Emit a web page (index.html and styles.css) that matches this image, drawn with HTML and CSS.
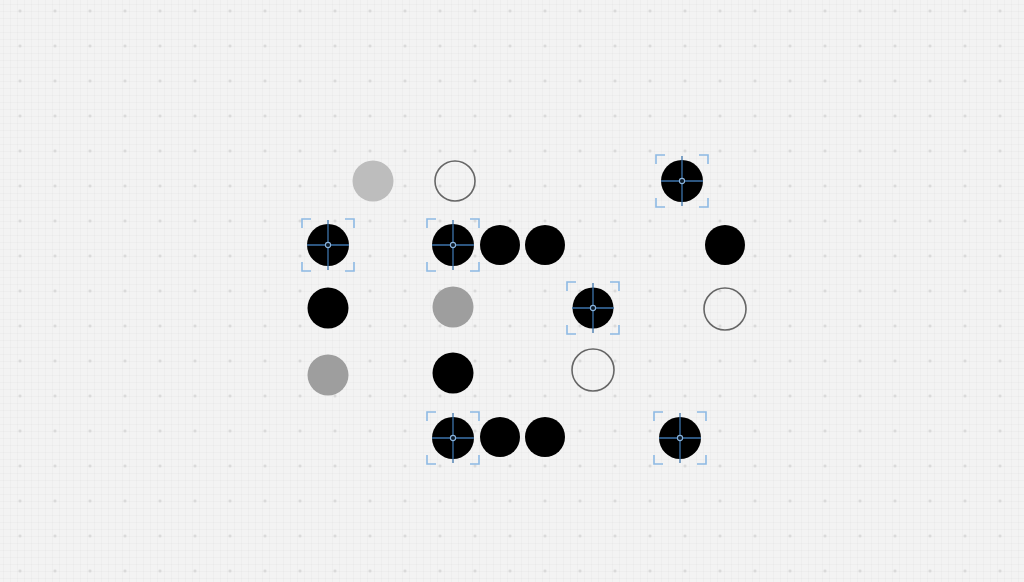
FILE: index.html
```html
<!DOCTYPE html>
<html>
<head>
<meta charset="utf-8">
<link rel="stylesheet" href="styles.css">
</head>
<body>
<div class="canvas">
  <svg class="board" width="1024" height="582" viewBox="0 0 1024 582">
    <defs>
      <g id="sel">
        <path class="bracket" d="M-26 -17 V-26 H-17 M17 -26 H26 V-17 M26 17 V26 H17 M-17 26 H-26 V17"/>
        <line class="cross" x1="0" y1="-25" x2="0" y2="25"/>
        <line class="cross" x1="-21" y1="0" x2="21" y2="0"/>
        <circle class="hub" r="2.6"/>
      </g>
    </defs>
    <!-- row 1 -->
    <circle class="dot light" cx="373" cy="181" r="20.5"/>
    <circle class="dot ring" cx="455" cy="181" r="20"/>
    <circle class="dot black" cx="682" cy="181" r="21"/>
    <use href="#sel" x="682" y="181"/>
    <!-- row 2 -->
    <circle class="dot black" cx="328" cy="245" r="21"/>
    <use href="#sel" x="328" y="245"/>
    <circle class="dot black" cx="453" cy="245" r="21"/>
    <use href="#sel" x="453" y="245"/>
    <circle class="dot black" cx="500" cy="245" r="20"/>
    <circle class="dot black" cx="545" cy="245" r="20"/>
    <circle class="dot black" cx="725" cy="245" r="20"/>
    <!-- row 3 -->
    <circle class="dot black" cx="328" cy="308" r="20.5"/>
    <circle class="dot mid" cx="453" cy="307" r="20.5"/>
    <circle class="dot black" cx="593" cy="308" r="20.5"/>
    <use href="#sel" x="593" y="308"/>
    <circle class="dot ring" cx="725" cy="309" r="21"/>
    <!-- row 4 -->
    <circle class="dot mid" cx="328" cy="375" r="20.5"/>
    <circle class="dot black" cx="453" cy="373" r="20.5"/>
    <circle class="dot ring" cx="593" cy="370" r="21"/>
    <!-- row 5 -->
    <circle class="dot black" cx="453" cy="438" r="21"/>
    <use href="#sel" x="453" y="438"/>
    <circle class="dot black" cx="500" cy="437" r="20"/>
    <circle class="dot black" cx="545" cy="437" r="20"/>
    <circle class="dot black" cx="680" cy="438" r="21"/>
    <use href="#sel" x="680" y="438"/>
  </svg>
</div>
</body>
</html>
```

FILE: styles.css
```css
html, body {
  margin: 0;
  padding: 0;
  background: #f3f3f3;
  font-family: "Liberation Sans", Arial, sans-serif;
}

.canvas {
  position: relative;
  width: 1024px;
  height: 582px;
  overflow: hidden;
  background-color: #f3f3f3;
  background-image:
    radial-gradient(circle at center, #d2d2d2 0 0.9px, transparent 1.6px),
    linear-gradient(to right, rgba(0,0,0,0.02) 1px, transparent 1px),
    linear-gradient(to bottom, rgba(0,0,0,0.02) 1px, transparent 1px);
  background-size: 35px 35px, 7px 7px, 7px 7px;
  background-position: 2.5px -6.5px, 3px 4px, 3px 4px;
}

.board {
  display: block;
}

.dot.black { fill: #000; }
.dot.light { fill: #bdbdbd; }
.dot.mid { fill: #9e9e9e; }
.dot.ring {
  fill: none;
  stroke: #666;
  stroke-width: 1.6;
}

.bracket {
  fill: none;
  stroke: #8db9e4;
  stroke-width: 1.6;
}

.cross {
  stroke: #3c73ab;
  stroke-width: 1.3;
}

.hub {
  fill: #0c1a28;
  stroke: #8cb4dc;
  stroke-width: 1.1;
}
```
